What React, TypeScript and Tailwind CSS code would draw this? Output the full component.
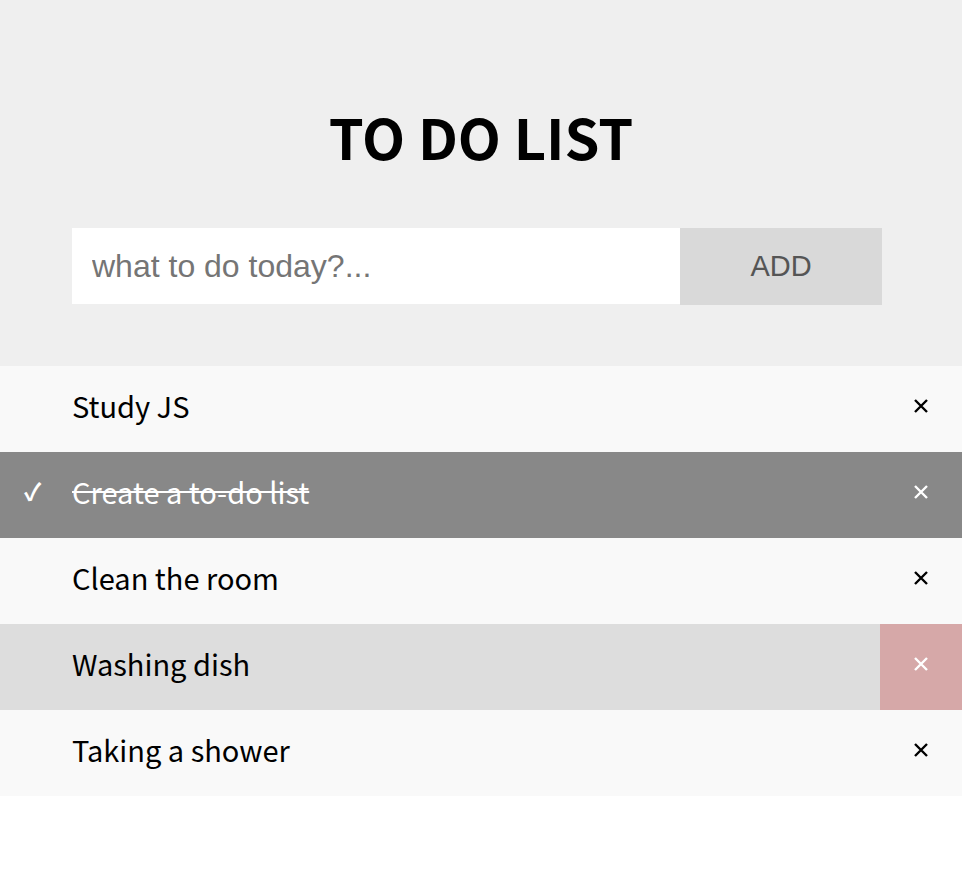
import { useState } from "react";

type Todo = {
  id: number;
  text: string;
  done: boolean;
};

const initialTodos: Todo[] = [
  { id: 1, text: "Study JS", done: false },
  { id: 2, text: "Create a to-do list", done: true },
  { id: 3, text: "Clean the room", done: false },
  { id: 4, text: "Washing dish", done: false },
  { id: 5, text: "Taking a shower", done: false },
];

export default function App() {
  const [todos, setTodos] = useState<Todo[]>(initialTodos);
  const [value, setValue] = useState("");
  // row that looks hovered in the shot
  const [hovered] = useState<number | null>(4);

  const addTodo = () => {
    if (!value.trim()) return;
    setTodos((prev) => [...prev, { id: Date.now(), text: value, done: false }]);
    setValue("");
  };

  const toggle = (id: number) =>
    setTodos((prev) => prev.map((t) => (t.id === id ? { ...t, done: !t.done } : t)));

  const remove = (id: number) => setTodos((prev) => prev.filter((t) => t.id !== id));

  return (
    <div className="w-[962px] bg-white font-['Noto_Sans_CJK_KR','Noto_Sans',sans-serif]">
      {/* = HEADER = */}
      <div className="bg-[#efefef] pt-[96px] pb-[61px]">
        <h1 className="text-center text-[56px] font-bold leading-[80px] text-black">TO DO LIST</h1>

        <div className="ml-[72px] mr-[80px] mt-[52px] flex">
          <input
            type="text"
            placeholder="what to do today?..."
            value={value}
            onChange={(e) => setValue(e.target.value)}
            className="h-[76px] flex-1 bg-white px-[20px] font-['Liberation_Sans',Arial,sans-serif] text-[32px] text-black placeholder:text-[#757575] focus:outline-none"
          />
          <button
            onClick={addTodo}
            className="h-[77px] w-[202px] bg-[#d9d9d9] font-['Liberation_Sans',Arial,sans-serif] text-[29px] text-[#555]"
          >
            ADD
          </button>
        </div>
      </div>

      {/* = LIST = */}
      <ul>
        {todos.map((t) => (
          <li
            key={t.id}
            onClick={() => toggle(t.id)}
            className={`relative flex h-[86px] cursor-pointer items-center ${
              t.done
                ? "bg-[#888] text-white"
                : hovered === t.id
                ? "bg-[#ddd] text-black"
                : "bg-[#f9f9f9] text-black"
            }`}
          >
            <span className="w-[72px] pb-[8px] pl-[24px] text-[24px] font-bold leading-none">{t.done ? "✓" : ""}</span>
            <span className={`flex-1 pb-[8px] text-[29px] leading-none ${t.done ? "line-through" : ""}`}>{t.text}</span>
            <button
              onClick={(e) => {
                e.stopPropagation();
                remove(t.id);
              }}
              className={`flex h-full w-[82px] items-center justify-center pb-[6px] ${
                hovered === t.id && !t.done ? "bg-[#d6a8a8] text-white" : t.done ? "text-white" : "text-black"
              }`}
            >
              <svg width="16" height="16" viewBox="0 0 16 16" className="ml-[-1px]">
                <path d="M2 2L14 14M14 2L2 14" stroke="currentColor" strokeWidth="2.4" />
              </svg>
            </button>
          </li>
        ))}
      </ul>
    </div>
  );
}
